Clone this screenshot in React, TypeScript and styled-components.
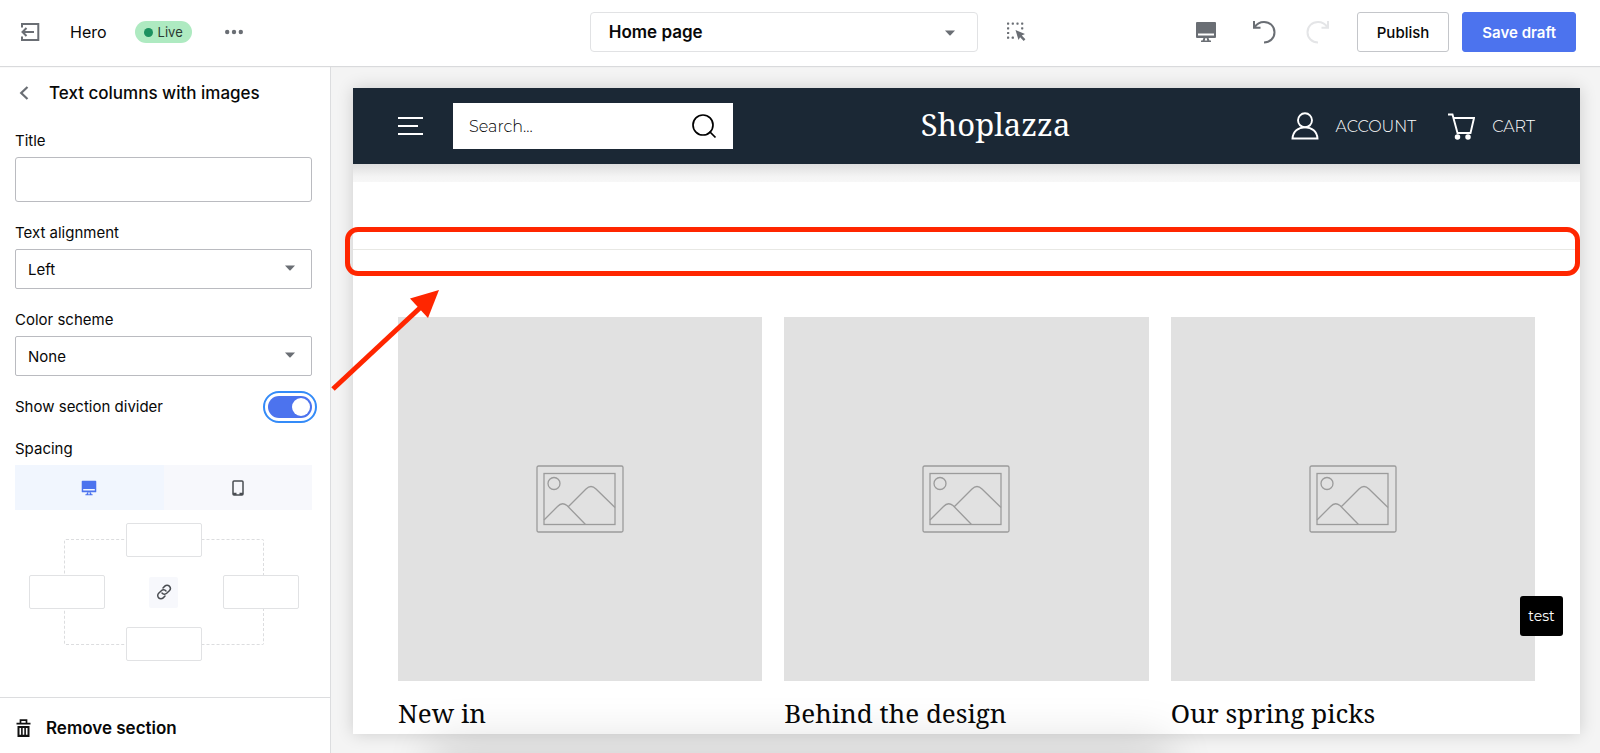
import React from 'react';
import styled, { createGlobalStyle } from 'styled-components';

const ui = `Inter, "Liberation Sans", sans-serif`;
const shop = `Montserrat, "Open Sans", sans-serif`;
const serif = `"Noto Serif", "DejaVu Serif Condensed", "DejaVu Serif", "Liberation Serif", serif`;

const GlobalStyle = createGlobalStyle`
  *, *::before, *::after { box-sizing: border-box; }
  body { margin: 0; font-family: ${ui}; font-size: 15px; color: #080808; background: #fff; }
  button, input, select { font: inherit; color: inherit; margin: 0; }
  button { cursor: pointer; }
  svg { display: block; }
`;

const Page = styled.div`
  height: 100vh;
  display: flex;
  flex-direction: column;
  overflow: hidden;
`;

const TopBar = styled.header`
  position: relative;
  z-index: 3;
  flex: none;
  height: 66px;
  display: grid;
  grid-template-columns: 20fr auto 21fr;
  align-items: center;
  padding: 0 24px 2px 20px;
  background: #fff;
  box-shadow: 0 1px 1px #d9dadc;
`;

const BarGroup = styled.div<{ $end?: boolean }>`
  display: flex;
  align-items: center;
  justify-content: ${p => (p.$end ? 'flex-end' : 'flex-start')};
`;

const BarTools = styled.div`
  display: flex;
  align-items: center;
  justify-content: space-between;
  padding-left: 29px;
`;

const IconButton = styled.button<{ $gap?: number }>`
  display: grid;
  place-items: center;
  padding: 0;
  border: 0;
  background: none;
  color: #6a6e74;
  margin-right: ${p => p.$gap ?? 0}px;

  &:disabled { color: #e4e5e7; }
`;

const TemplateName = styled.span`
  font-size: 16px;
  margin: 0 28px 0 30px;
`;

const LiveBadge = styled.span`
  display: flex;
  align-items: center;
  gap: 5px;
  height: 22px;
  padding: 0 9px;
  margin-right: 33px;
  border-radius: 11px;
  background: #aeeac1;
  font-size: 13px;
  color: #2b3a33;

  &::before {
    content: '';
    width: 9px;
    height: 9px;
    border-radius: 50%;
    background: #1c9160;
  }
`;

const SelectWrap = styled.div<{ $page?: boolean }>`
  position: relative;
  width: ${p => (p.$page ? '388px' : '100%')};
  color: #6a6e74;

  svg {
    position: absolute;
    top: ${p => (p.$page ? 18 : 16)}px;
    right: ${p => (p.$page ? 22 : 16)}px;
    pointer-events: none;
  }
`;

const Select = styled.select<{ $page?: boolean }>`
  appearance: none;
  display: block;
  width: 100%;
  height: 40px;
  padding: 0 ${p => (p.$page ? 18 : 12)}px;
  border: 1px solid ${p => (p.$page ? '#e1e2e4' : '#babbc0')};
  border-radius: ${p => (p.$page ? 4 : 2)}px;
  background: #fff;
  color: #080808;
  font-size: ${p => (p.$page ? 17 : 15)}px;
  font-weight: ${p => (p.$page ? 600 : 400)};
`;

const ActionButton = styled.button<{ $primary?: boolean }>`
  height: 40px;
  padding: 0 19px;
  border: 1px solid ${p => (p.$primary ? '#4c73ee' : '#c4c6ca')};
  border-radius: 3px;
  background: ${p => (p.$primary ? '#4c73ee' : '#fff')};
  color: ${p => (p.$primary ? '#fff' : '#080808')};
  font-size: 15px;
  font-weight: ${p => (p.$primary ? 600 : 500)};
  margin-left: ${p => (p.$primary ? 13 : 0)}px;
`;

const Workspace = styled.div`
  flex: 1;
  min-height: 0;
  display: grid;
  grid-template-columns: 331px 1fr;
`;

const Sidebar = styled.aside`
  display: flex;
  flex-direction: column;
  min-height: 0;
  border-right: 1px solid #dcdddf;
  background: #fff;
`;

const SidebarBody = styled.div`
  flex: 1;
  padding: 14px 18px 0 15px;
`;

const SidebarTitle = styled.div`
  display: flex;
  align-items: center;
  gap: 20px;
  height: 26px;
  padding-left: 4px;
  margin-bottom: 25px;

  h2 { margin: 0; font-size: 17px; font-weight: 500; }
`;

const Field = styled.div`
  display: flex;
  flex-direction: column;
  gap: 6px;
  margin-bottom: 21px;
`;

const Label = styled.label`
  font-size: 15px;
  line-height: 20px;
`;

const TextInput = styled.input`
  height: 45px;
  width: 100%;
  padding: 0 12px;
  border: 1px solid #babbc0;
  border-radius: 3px;
`;

const ToggleRow = styled.div`
  display: flex;
  align-items: center;
  justify-content: space-between;
  height: 20px;
  margin-bottom: 22px;
`;

const Toggle = styled.input`
  appearance: none;
  width: 44px;
  height: 22px;
  padding: 2px;
  border-radius: 11px;
  background: #4c73ee;
  outline: 2px solid #348bf8;
  outline-offset: 3px;
  display: flex;
  justify-content: flex-end;

  &::before {
    content: '';
    width: 18px;
    height: 18px;
    border-radius: 50%;
    background: #fff;
  }
`;

const SpacingLabel = styled.div`
  line-height: 20px;
  margin-bottom: 6px;
`;

const DeviceTabs = styled.div`
  display: grid;
  grid-template-columns: 1fr 1fr;
  height: 45px;
  margin-bottom: 13px;
`;

const DeviceTab = styled.button<{ $active?: boolean }>`
  display: grid;
  place-items: center;
  border: 0;
  padding: 0;
  background: ${p => (p.$active ? '#f1f6fe' : '#f7f8fc')};
  color: ${p => (p.$active ? '#4c73ee' : '#4a4d52')};
`;

const SpacingGrid = styled.div`
  display: grid;
  grid-template-columns: 76px 76px 76px;
  grid-template-rows: 34px 34px 34px;
  gap: 18px 21px;
  justify-content: center;
`;

const SpacingOutline = styled.div`
  grid-area: 1 / 1 / -1 / -1;
  margin: 16px 35px;
  border: 1px dashed #dcdddf;
  border-radius: 2px;
`;

const SpacingInput = styled.input<{ $row: number; $col: number }>`
  grid-row: ${p => p.$row};
  grid-column: ${p => p.$col};
  width: 100%;
  min-width: 0;
  border: 1px solid #e1e2e4;
  border-radius: 2px;
  background: #fff;
  text-align: center;
`;

const LinkButton = styled.button`
  grid-area: 2 / 2;
  place-self: center;
  display: grid;
  place-items: center;
  width: 29px;
  height: 31px;
  border: 0;
  border-radius: 2px;
  padding: 0;
  background: #f7f8fc;
  color: #4a4d52;
`;

const RemoveButton = styled.button`
  display: flex;
  align-items: center;
  gap: 15px;
  height: 56px;
  padding: 4px 16px 0;
  border: 0;
  border-top: 1px solid #dcdddf;
  background: #fff;
  font-size: 17px;
  font-weight: 600;
`;

const PreviewPane = styled.main`
  position: relative;
  min-width: 0;
  min-height: 0;
  display: flex;
  padding: 22px 20px 19px 22px;
  background: #f4f4f4;
  overflow: hidden;
`;

const Frame = styled.div`
  flex: 1;
  min-width: 0;
  overflow: hidden;
  background: #fff;
  box-shadow: 0 0 16px rgba(0, 0, 0, 0.16);
`;

const DockShadow = styled.div`
  position: absolute;
  top: 100%;
  left: 9%;
  right: 35%;
  height: 40px;
  box-shadow: 0 0 48px 12px rgba(0, 0, 0, 0.14);
`;

const StoreHeader = styled.header`
  display: grid;
  grid-template-columns: 9fr auto 8fr;
  align-items: center;
  height: 76px;
  padding: 0 45px;
  background: #1b2835;
  color: #fff;
  font-family: ${shop};
`;

const SearchBox = styled.form`
  display: flex;
  align-items: center;
  justify-content: space-between;
  width: 280px;
  height: 46px;
  margin-left: 30px;
  padding: 0 16px;
  background: #fff;
  color: #000;

  input {
    flex: 1;
    min-width: 0;
    padding: 0;
    border: 0;
    background: none;
    font-size: 16px;
    font-weight: 300;
  }
  input::placeholder { color: #000; opacity: 1; }
`;

const StoreName = styled.h1`
  margin: 0;
  font-family: ${serif};
  font-size: 31px;
  line-height: 40px;
  padding-bottom: 4px;
  font-weight: 400;
`;

const StoreLink = styled.a`
  display: flex;
  align-items: center;
  gap: 17px;
  margin-left: 31px;
  color: inherit;
  font-size: 16px;
  font-weight: 300;
  text-decoration: none;
`;

const HeaderShade = styled.div`
  height: 18px;
  background: linear-gradient(#dedede, #f4f4f4 70%, #f7f7f7);
`;

const Divider = styled.hr`
  margin: 67px 0;
  border: 0;
  border-top: 1px solid #e8e8e4;
`;

const Columns = styled.section`
  display: grid;
  grid-template-columns: repeat(3, 1fr);
  gap: 22px;
  padding: 0 45px 40px;
`;

const ColumnImage = styled.div`
  display: grid;
  place-items: center;
  aspect-ratio: 1;
  background: #e1e1e1;
  color: #9b9b9b;
`;

const ColumnTitle = styled.h3`
  margin: 12px 0 0;
  font-family: ${serif};
  font-size: 26px;
  line-height: 40px;
  font-weight: 400;
  color: #080808;
`;

const FloatingTag = styled.button`
  position: absolute;
  right: 37px;
  bottom: 117px;
  width: 43px;
  height: 40px;
  padding: 0;
  border: 0;
  border-radius: 3px;
  background: #000;
  color: #fff;
  font-family: ${shop};
  font-size: 14px;
`;

const Highlight = styled.div`
  position: absolute;
  top: 161px;
  left: 14px;
  right: 20px;
  height: 49px;
  border: 5px solid #ff2600;
  border-radius: 13px;
`;

const Arrow = styled.svg`
  position: absolute;
  top: 223px;
  left: 0;
`;

const Caret = () => (
  <svg width="12" height="6" viewBox="0 0 12 6" aria-hidden="true"><path d="M1 0.5h10L6.6 5.2a.9.9 0 0 1-1.2 0Z" fill="currentColor" /></svg>
);

const Monitor = ({ size }: { size: number }) => (
  <svg width={size} height={size} viewBox="0 0 22 22" fill="currentColor" aria-hidden="true">
    <path fillRule="evenodd" d="M2 1h18a1 1 0 0 1 1 1v14a1 1 0 0 1-1 1H2a1 1 0 0 1-1-1V2a1 1 0 0 1 1-1ZM3 12.500v2h16v-2Z" />
    <path d="M8.500 17h2l-.8 2.500h2.600l-.8-2.500h2l1 2.500h1.500V21H6v-1.500h1.500Z" />
  </svg>
);

const Undo = () => (
  <svg width="24" height="24" viewBox="0 0 24 24" fill="none" stroke="currentColor" strokeWidth="2" aria-hidden="true">
    <path d="M2 1v6.800h6.500M2.400 7.400C5 3.500 8.500 2 12 2c6 0 10.500 4.300 10.500 10.200S18 22.500 12 22.500" />
  </svg>
);

const Redo = () => (
  <svg width="24" height="24" viewBox="0 0 24 24" fill="none" stroke="currentColor" strokeWidth="2" aria-hidden="true">
    <path d="M22 1v6.800h-6.500M21.600 7.400C19 3.500 15.500 2 12 2 6 2 1.500 6.300 1.500 12.200S6 22.500 12 22.500" />
  </svg>
);

const Exit = () => (
  <svg width="20" height="20" viewBox="0 0 20 20" fill="none" stroke="currentColor" strokeWidth="2" aria-hidden="true">
    <path d="M2 5.500V2h16.300v16H2v-3.500M14 10H3M6.500 6 2.500 10l4 4" />
  </svg>
);

const Inspect = () => (
  <svg width="20" height="20" viewBox="0 0 20 20" fill="currentColor" aria-hidden="true">
    {[0, 4.7, 9.4, 14.1].map(n => <rect key={n} x={n} y="0.5" width="2.2" height="2.2" rx=".6" />)}
    {[5.2, 9.9, 14.6].map(n => <rect key={n} x="0" y={n} width="2.2" height="2.2" rx=".6" />)}
    <rect x="4.7" y="14.6" width="2.2" height="2.2" rx=".6" />
    <rect x="14.1" y="5.2" width="2.2" height="2.2" rx=".6" />
    <path d="m8.500 8 9.500 4-3.200 1.600 3.600 3.600-1.700 1.700-3.600-3.700L11.500 18Z" />
  </svg>
);

const Placeholder = () => (
  <svg width="88" height="68" viewBox="0 0 88 68" fill="none" stroke="currentColor" strokeWidth="1.3" aria-hidden="true">
    <rect x="1" y="1" width="86" height="66" rx="1.5" />
    <rect x="8" y="8.5" width="71" height="51" />
    <circle cx="18" cy="18.5" r="6" />
    <path d="M8 55 21.500 41.500Q26 36.500 31 40.500L49.500 59.500M32 42 50 24Q55 19 60 24L79 42.500" />
  </svg>
);

const columns = ['New in', 'Behind the design', 'Our spring picks'];

export default function App() {
  return (
    <>
      <GlobalStyle />
      <Page>
        <TopBar>
          <BarGroup>
            <IconButton aria-label="Exit"><Exit /></IconButton>
            <TemplateName>Hero</TemplateName>
            <LiveBadge>Live</LiveBadge>
            <IconButton aria-label="More">
              <svg width="18" height="6" viewBox="0 0 18 6" fill="currentColor"><circle cx="2.2" cy="3" r="2.2" /><circle cx="9" cy="3" r="2.2" /><circle cx="15.8" cy="3" r="2.2" /></svg>
            </IconButton>
          </BarGroup>
          <SelectWrap $page>
            <Select $page aria-label="Page"><option>Home page</option></Select>
            <Caret />
          </SelectWrap>
          <BarTools>
            <IconButton aria-label="Select element"><Inspect /></IconButton>
            <BarGroup $end>
              <IconButton $gap={35} aria-label="Desktop preview"><Monitor size={22} /></IconButton>
              <IconButton $gap={30} aria-label="Undo"><Undo /></IconButton>
              <IconButton $gap={27} aria-label="Redo" disabled><Redo /></IconButton>
              <ActionButton>Publish</ActionButton>
              <ActionButton $primary>Save draft</ActionButton>
            </BarGroup>
          </BarTools>
        </TopBar>
        <Workspace>
          <Sidebar>
            <SidebarBody>
              <SidebarTitle>
                <IconButton aria-label="Back">
                  <svg width="10" height="14" viewBox="0 0 10 14" fill="none" stroke="currentColor" strokeWidth="2.2"><path d="M8.500 1 2.200 7l6.300 6" /></svg>
                </IconButton>
                <h2>Text columns with images</h2>
              </SidebarTitle>
              <Field>
                <Label htmlFor="title">Title</Label>
                <TextInput id="title" type="text" />
              </Field>
              <Field>
                <Label htmlFor="align">Text alignment</Label>
                <SelectWrap><Select id="align"><option>Left</option></Select><Caret /></SelectWrap>
              </Field>
              <Field>
                <Label htmlFor="scheme">Color scheme</Label>
                <SelectWrap><Select id="scheme"><option>None</option></Select><Caret /></SelectWrap>
              </Field>
              <ToggleRow>
                <Label htmlFor="divider">Show section divider</Label>
                <Toggle id="divider" type="checkbox" role="switch" defaultChecked />
              </ToggleRow>
              <SpacingLabel>Spacing</SpacingLabel>
              <DeviceTabs>
                <DeviceTab $active aria-label="Desktop"><Monitor size={16} /></DeviceTab>
                <DeviceTab aria-label="Mobile">
                  <svg width="12" height="16" viewBox="0 0 12 16" fill="none" stroke="currentColor" strokeWidth="1.5"><rect x="1" y="1" width="10" height="14" rx="1" /><path d="M1 13.800h3.500M7.500 13.800H11" strokeWidth="2.2" /></svg>
                </DeviceTab>
              </DeviceTabs>
              <SpacingGrid>
                <SpacingOutline />
                <SpacingInput $row={1} $col={2} aria-label="Top spacing" />
                <SpacingInput $row={2} $col={1} aria-label="Left spacing" />
                <LinkButton aria-label="Link values">
                  <svg width="16" height="16" viewBox="0 0 24 24" fill="none" stroke="currentColor" strokeWidth="2.2" strokeLinecap="round">
                    <path d="M9 13.500a4.800 4.800 0 0 0 7 .5l4-4a4.800 4.800 0 0 0-6.800-6.800L10.500 6M15 10.500a4.800 4.800 0 0 0-7-.5l-4 4a4.800 4.800 0 0 0 6.800 6.800L13.500 18" />
                  </svg>
                </LinkButton>
                <SpacingInput $row={2} $col={3} aria-label="Right spacing" />
                <SpacingInput $row={3} $col={2} aria-label="Bottom spacing" />
              </SpacingGrid>
            </SidebarBody>
            <RemoveButton>
              <svg width="15" height="18" viewBox="0 0 15 18" aria-hidden="true">
                <path d="M4.500 4V1.200h6V4M.5 4.600h14" fill="none" stroke="#111" strokeWidth="1.7" />
                <path fillRule="evenodd" fill="#111" d="M1.500 7h12v11h-12ZM3.500 9v6.800h1.600V9ZM6.700 9v6.800h1.600V9ZM9.900 9v6.800h1.600V9Z" />
              </svg>
              Remove section
            </RemoveButton>
          </Sidebar>
          <PreviewPane>
            <Frame>
              <StoreHeader>
                <BarGroup>
                  <IconButton aria-label="Menu">
                    <svg width="25" height="20" viewBox="0 0 25 20" stroke="#fff" strokeWidth="2"><path d="M0 2h25M0 10h20M0 18h25" /></svg>
                  </IconButton>
                  <SearchBox>
                    <input type="text" placeholder="Search..." aria-label="Search" />
                    <svg width="26" height="26" viewBox="0 0 26 26" fill="none" stroke="#000" strokeWidth="1.7"><circle cx="12" cy="12" r="10" /><path d="m18.500 18.500 6 6" /></svg>
                  </SearchBox>
                </BarGroup>
                <StoreName>Shoplazza</StoreName>
                <BarGroup $end>
                  <StoreLink href="#account">
                    <svg width="28" height="28" viewBox="0 0 28 28" fill="none" stroke="#fff" strokeWidth="1.9"><circle cx="14" cy="8.3" r="7" /><path d="M1.500 26.500C2 19.500 7 15.400 14 15.400s12 4.100 12.500 11.100Z" /></svg>
                    ACCOUNT
                  </StoreLink>
                  <StoreLink href="#cart">
                    <svg width="28" height="28" viewBox="0 0 28 28" fill="none" stroke="#fff" strokeWidth="1.9"><path d="M1 2.500h4.500l5 18.500h13L27 6H6.500" /><circle cx="10.5" cy="25" r="1.8" fill="#fff" /><circle cx="21" cy="25" r="1.8" fill="#fff" /></svg>
                    CART
                  </StoreLink>
                </BarGroup>
              </StoreHeader>
              <HeaderShade />
              <Divider />
              <Columns>
                {columns.map(title => (
                  <article key={title}>
                    <ColumnImage><Placeholder /></ColumnImage>
                    <ColumnTitle>{title}</ColumnTitle>
                  </article>
                ))}
              </Columns>
            </Frame>
            <DockShadow />
            <FloatingTag>test</FloatingTag>
            <Highlight />
            <Arrow width="112" height="106" viewBox="0 0 112 106" aria-hidden="true">
              <path d="M2 100 91 17" stroke="#ff2600" strokeWidth="5" />
              <path d="M108 1 79 9.500 97 29Z" fill="#ff2600" />
            </Arrow>
          </PreviewPane>
        </Workspace>
      </Page>
    </>
  );
}
